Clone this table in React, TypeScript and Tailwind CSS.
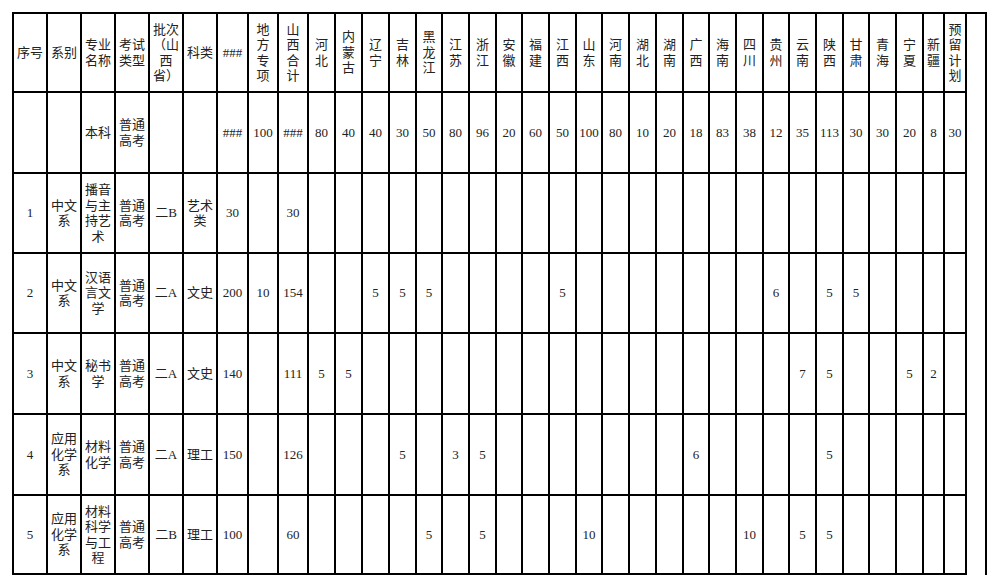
import React from "react";

type Cell = string | string[];

const provinces = [
  "河北", "内蒙古", "辽宁", "吉林", "黑龙江", "江苏", "浙江", "安徽", "福建", "江西", "山东", "河南",
  "湖北", "湖南", "广西", "海南", "四川", "贵州", "云南", "陕西", "甘肃", "青海", "宁夏",
];

const header: Cell[] = [
  ["序号"],
  ["系别"],
  ["专业", "名称"],
  ["考试", "类型"],
  ["批次", "（山", "西", "省）"],
  ["科类"],
  ["###"],
  ["地", "方", "专", "项"],
  ["山", "西", "合", "计"],
  ...provinces.map((p) => p.split("")),
  ["新", "疆"],
  ["预", "留", "计", "划"],
];

function prov(m: Record<number, string>): string[] {
  return provinces.map((_, i) => m[i] ?? "");
}

const rows: Cell[][] = [
  [
    "", "", ["本科"], ["普通", "高考"], "", "", "###", "100", "###",
    ...["80", "40", "40", "30", "50", "80", "96", "20", "60", "50", "100", "80", "10", "20", "18", "83", "38", "12", "35", "113", "30", "30", "20"],
    "8", "30",
  ],
  [
    "1", ["中文", "系"], ["播音", "与主", "持艺", "术"], ["普通", "高考"], "二B", ["艺术", "类"], "30", "", "30",
    ...prov({}), "", "",
  ],
  [
    "2", ["中文", "系"], ["汉语", "言文", "学"], ["普通", "高考"], "二A", ["文史"], "200", "10", "154",
    ...prov({ 2: "5", 3: "5", 4: "5", 9: "5", 17: "6", 19: "5", 20: "5" }), "", "",
  ],
  [
    "3", ["中文", "系"], ["秘书", "学"], ["普通", "高考"], "二A", ["文史"], "140", "", "111",
    ...prov({ 0: "5", 1: "5", 18: "7", 19: "5", 22: "5" }), "2", "",
  ],
  [
    "4", ["应用", "化学", "系"], ["材料", "化学"], ["普通", "高考"], "二A", ["理工"], "150", "", "126",
    ...prov({ 3: "5", 5: "3", 6: "5", 14: "6", 19: "5" }), "", "",
  ],
  [
    "5", ["应用", "化学", "系"], ["材料", "科学", "与工", "程"], ["普通", "高考"], "二B", ["理工"], "100", "", "60",
    ...prov({ 4: "5", 6: "5", 10: "10", 16: "10", 18: "5", 19: "5" }), "", "",
  ],
];

function CellView({ c }: { c: Cell }) {
  const lines = Array.isArray(c) ? c : c ? [c] : [];
  return (
    <div className="flex flex-col items-center justify-center border-r-2 border-b-2 border-black text-center whitespace-nowrap overflow-hidden">
      {lines.map((l, i) => (
        <span key={i} className="block leading-[15.5px]">
          {l}
        </span>
      ))}
    </div>
  );
}

export default function App() {
  const all = [header, ...rows];
  return (
    <div
      className="w-[999px] h-[585px] bg-white pt-3 pl-3 text-[13px] text-[#222222]"
      style={{ fontFamily: '"Liberation Serif", "Noto Sans CJK SC", serif' }}
    >
      <div className="inline-grid border-t-2 border-l-2 border-black grid-cols-[34px_34px_34px_34px_34px_34px_31px_30px_30px_27px_27px_27px_27px_26px_27px_27px_26px_27px_27px_26px_27px_27px_27px_26px_27px_27px_26px_27px_27px_26px_27px_27px_21px_22px_20px] grid-rows-[79px_81px_80px_80px_81px_81px_79px]">
        {all.map((r, ri) => (
          <React.Fragment key={ri}>
            {r.map((c, ci) => (
              <CellView key={ci} c={c} />
            ))}
            <div className="border-r-2 border-black" />
          </React.Fragment>
        ))}
      </div>
    </div>
  );
}
